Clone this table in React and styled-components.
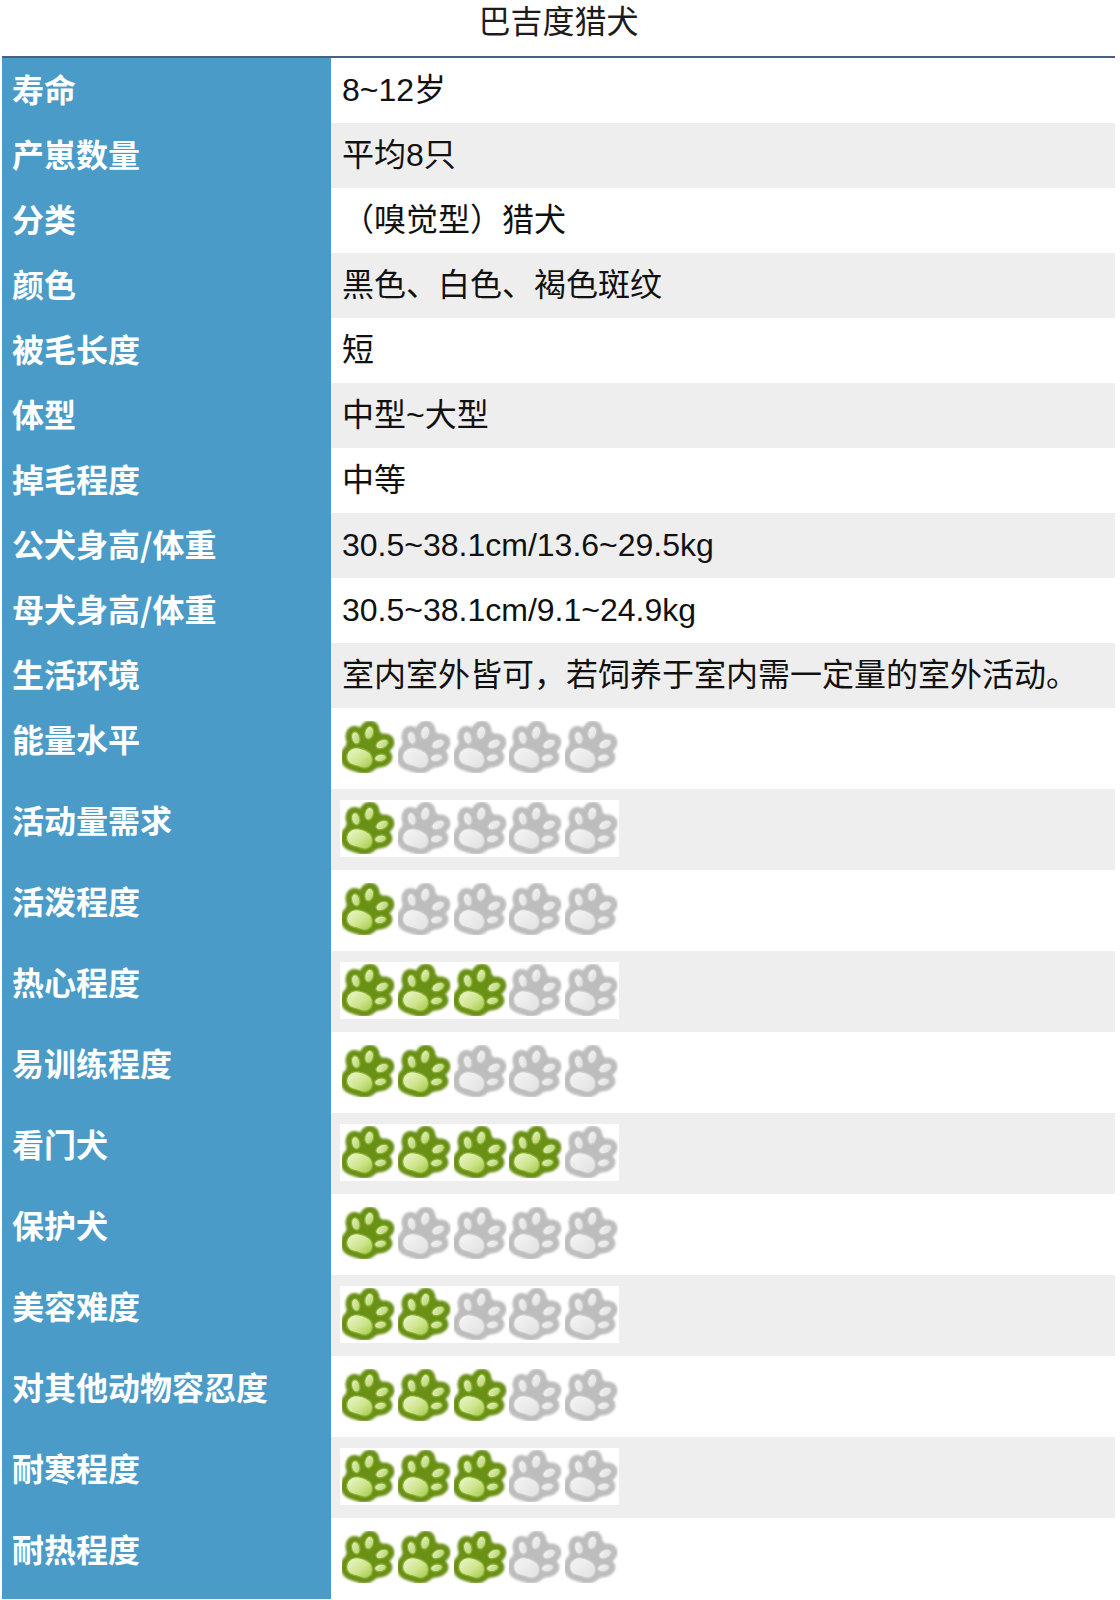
import React from "react";
import styled, { createGlobalStyle } from "styled-components";

const GlobalStyle = createGlobalStyle`
  html, body { margin: 0; padding: 0; background: #ffffff; }
  body { font-family: "Liberation Sans", "Noto Sans CJK SC", sans-serif; }
`;

const Page = styled.div`
  width: 1113px;
  padding-left: 2px;
  font-size: 32px;
  line-height: 45px;
`;

const Title = styled.div`
  text-align: center;
  color: #1c1c1c;
  padding-bottom: 11px;
  border-bottom: 2px solid #4b5d82;
  font-family: "Liberation Sans", "Noto Sans CJK SC", sans-serif;
`;

const Table = styled.div`
  display: flex;
  flex-direction: column;
`;

const Row = styled.div`
  display: grid;
  grid-template-columns: 329px 1fr;
  min-height: ${(p) => (p.$tall ? 81 : 65)}px;
`;

const Label = styled.div`
  background: #4b9bc8;
  color: #ffffff;
  font-weight: 700;
  padding: 8px 10px 12px;
  font-family: "Noto Sans CJK SC", sans-serif;
  white-space: nowrap;
`;

const Value = styled.div`
  background: ${(p) => (p.$shade ? "#eeeeee" : "#ffffff")};
  color: #111111;
  padding: ${(p) => (p.$tall ? "11px 10px 0 9px" : "10px 11px")};
  white-space: nowrap;
`;

const PawStrip = styled.div`
  display: flex;
  width: 279px;
  height: 57px;
  background: #ffffff;
`;

const PawSvg = styled.svg`
  width: 55.8px;
  height: 57px;
  display: block;
  flex: none;
  overflow: visible;
`;

const PAD =
  "M8.5 37 C8.5 29.5 15 26.5 21 28 C27.5 29.5 33.5 33 32.5 41 C31.5 47.5 25 48.5 21 46.5 C16 44.5 8.5 44.5 8.5 37 Z";
const TOES = [
  { cx: 17, cy: 18, rx: 3.9, ry: 6.2, r: -12 },
  { cx: 29.5, cy: 13, rx: 4.1, ry: 6.4, r: 12 },
  { cx: 41.5, cy: 24, rx: 6.3, ry: 4.1, r: -28 },
  { cx: 40, cy: 37.5, rx: 5.6, ry: 3.7, r: -12 },
];

const PAL = {
  on: { edge: "#6a9015", rim: "#86ad2e", pad: "pawPadG", toe: "pawToeG" },
  off: { edge: "#bdbdbd", rim: "#cacaca", pad: "pawPadX", toe: "pawToeX" },
};

const Defs = () => (
  <svg width="0" height="0" style={{ position: "absolute" }} aria-hidden="true">
    <defs>
      <linearGradient id="pawPadG" x1="0" y1="0" x2="1" y2="1">
        <stop offset="0" stopColor="#eef7d2" />
        <stop offset="0.55" stopColor="#cfe58e" />
        <stop offset="1" stopColor="#a2c845" />
      </linearGradient>
      <linearGradient id="pawToeG" x1="0" y1="0" x2="1" y2="1">
        <stop offset="0" stopColor="#e8f3c6" />
        <stop offset="1" stopColor="#b2d266" />
      </linearGradient>
      <linearGradient id="pawPadX" x1="0" y1="0" x2="1" y2="1">
        <stop offset="0" stopColor="#f6f6f6" />
        <stop offset="1" stopColor="#e0e0e0" />
      </linearGradient>
      <linearGradient id="pawToeX" x1="0" y1="0" x2="1" y2="1">
        <stop offset="0" stopColor="#f3f3f3" />
        <stop offset="1" stopColor="#e0e0e0" />
      </linearGradient>
      <filter id="pawSoft" x="-10%" y="-10%" width="120%" height="120%">
        <feGaussianBlur stdDeviation="0.9" />
      </filter>
    </defs>
  </svg>
);

const Paw = ({ on }) => {
  const p = on ? PAL.on : PAL.off;
  return (
    <PawSvg viewBox="0 0 56 57">
      <g transform="translate(28 28.5) scale(1.08 1.03) translate(-28.3 -27.4)">
        <g
          fill={p.edge}
          stroke={p.edge}
          strokeWidth="11"
          strokeLinejoin="round"
          filter="url(#pawSoft)"
        >
          <circle cx="28" cy="29" r="15" />
          <path d={PAD} />
          {TOES.map((t, i) => (
            <ellipse
              key={i}
              cx={t.cx}
              cy={t.cy}
              rx={t.rx}
              ry={t.ry}
              transform={`rotate(${t.r} ${t.cx} ${t.cy})`}
            />
          ))}
        </g>
        <g stroke={p.rim} strokeWidth="1.2">
          <path d={PAD} fill={`url(#${p.pad})`} />
          {TOES.map((t, i) => (
            <ellipse
              key={i}
              cx={t.cx}
              cy={t.cy}
              rx={t.rx}
              ry={t.ry}
              fill={`url(#${p.toe})`}
              transform={`rotate(${t.r} ${t.cx} ${t.cy})`}
            />
          ))}
        </g>
      </g>
    </PawSvg>
  );
};

const Rating = ({ n }) => (
  <PawStrip>
    {[0, 1, 2, 3, 4].map((i) => (
      <Paw key={i} on={i < n} />
    ))}
  </PawStrip>
);

const facts = [
  ["寿命", "8~12岁"],
  ["产崽数量", "平均8只"],
  ["分类", "（嗅觉型）猎犬"],
  ["颜色", "黑色、白色、褐色斑纹"],
  ["被毛长度", "短"],
  ["体型", "中型~大型"],
  ["掉毛程度", "中等"],
  ["公犬身高/体重", "30.5~38.1cm/13.6~29.5kg"],
  ["母犬身高/体重", "30.5~38.1cm/9.1~24.9kg"],
  ["生活环境", "室内室外皆可，若饲养于室内需一定量的室外活动。"],
];

const ratings = [
  ["能量水平", 1],
  ["活动量需求", 1],
  ["活泼程度", 1],
  ["热心程度", 3],
  ["易训练程度", 2],
  ["看门犬", 4],
  ["保护犬", 1],
  ["美容难度", 2],
  ["对其他动物容忍度", 3],
  ["耐寒程度", 3],
  ["耐热程度", 3],
];

export default function App() {
  return (
    <>
      <GlobalStyle />
      <Defs />
      <Page>
        <Title>巴吉度猎犬</Title>
        <Table>
          {facts.map(([k, v], i) => (
            <Row key={k}>
              <Label>{k}</Label>
              <Value $shade={i % 2 === 1}>{v}</Value>
            </Row>
          ))}
          {ratings.map(([k, n], i) => (
            <Row key={k} $tall>
              <Label>{k}</Label>
              <Value $tall $shade={(facts.length + i) % 2 === 1}>
                <Rating n={n} />
              </Value>
            </Row>
          ))}
        </Table>
      </Page>
    </>
  );
}
